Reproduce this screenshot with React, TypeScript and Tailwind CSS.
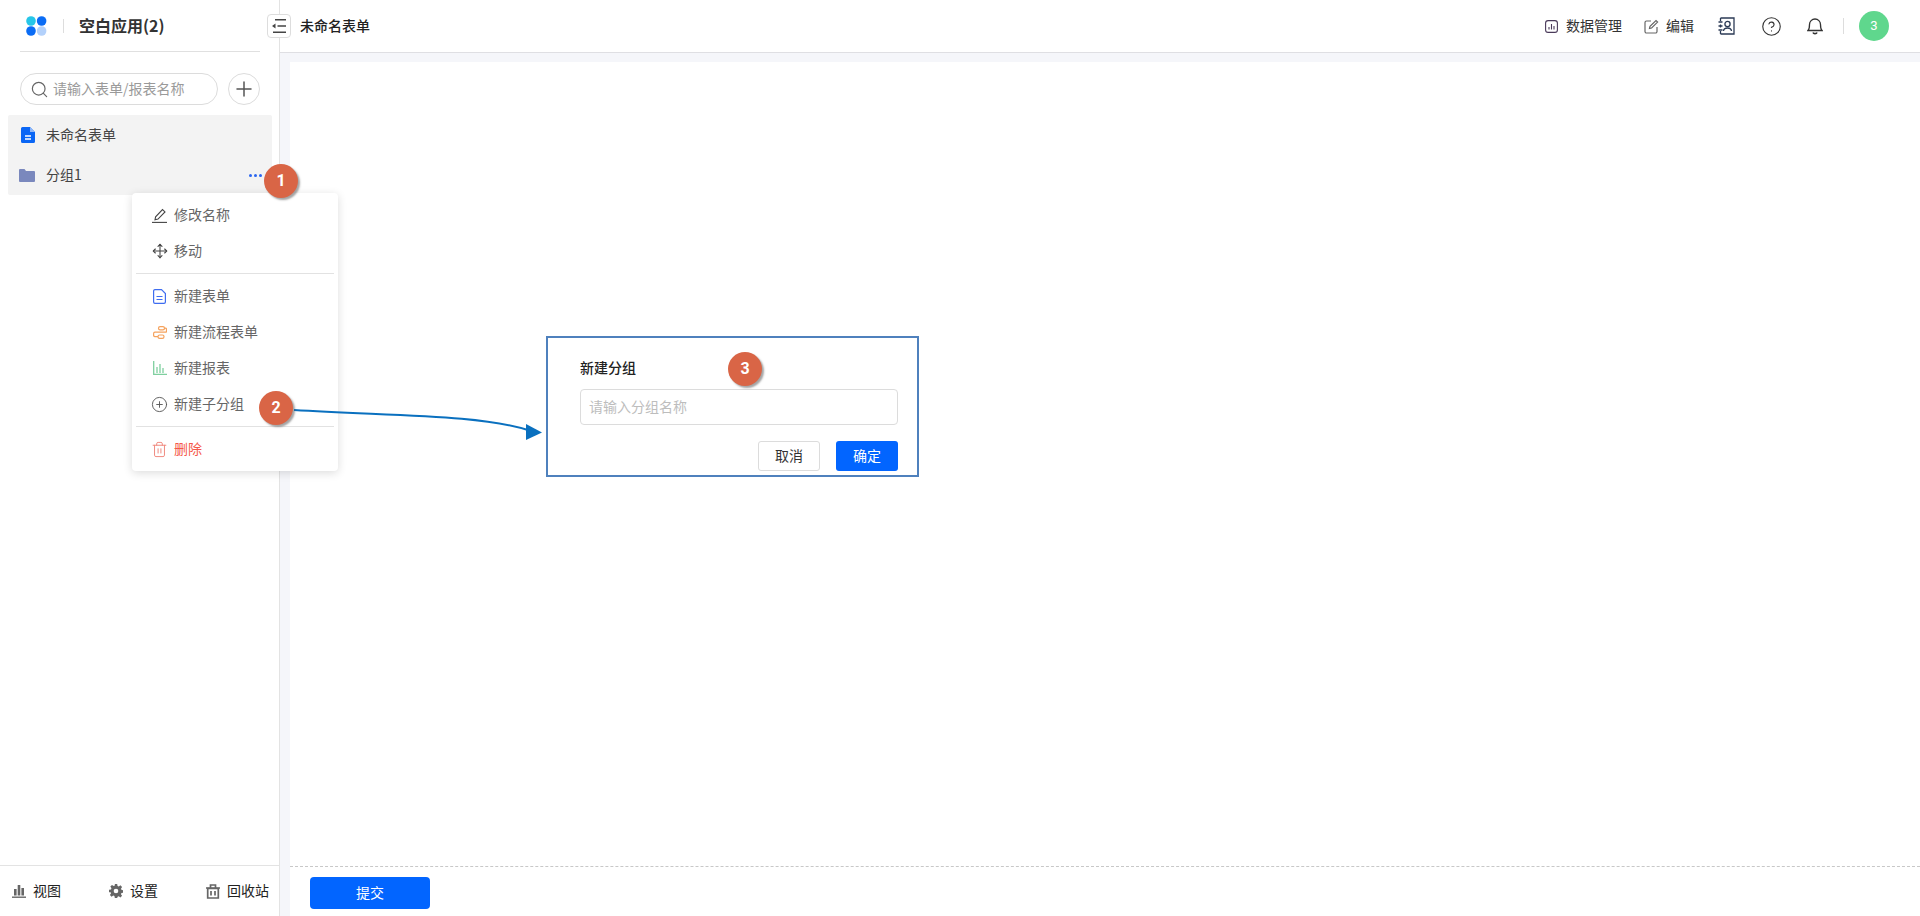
import React from "react";
import { Search, Plus, Move, CirclePlus, Trash2, HelpCircle } from "lucide-react";

function Badge({ n, className }: { n: number; className: string }) {
  return (
    <div className={`absolute w-[34px] h-[34px] rounded-full bg-[#d96546] text-white text-[16px] font-bold flex items-center justify-center shadow-[2px_2px_2px_rgba(90,90,90,0.55)] font-['Roboto',sans-serif] ${className}`}>
      {n}
    </div>
  );
}

function T({ children, className }: { children: React.ReactNode; className?: string }) {
  return <span className={`pb-[2px] ${className ?? ""}`}>{children}</span>;
}

function MenuItem({ icon, label, color }: { icon: React.ReactNode; label: string; color?: string }) {
  return (
    <div className={`h-9 flex items-center pl-[20px] gap-[7px] text-[14px] ${color ?? "text-[#666666]"}`}>
      <span className="w-[15px] h-[15px] flex items-center justify-center">{icon}</span>
      <T>{label}</T>
    </div>
  );
}

function Logo() {
  return (
    <svg width="21" height="20" viewBox="0 0 21 20" className="shrink-0">
      <circle cx="5" cy="5" r="4.8" fill="#26c6e8" />
      <circle cx="15.6" cy="5" r="4.8" fill="#0a6cf5" />
      <circle cx="5" cy="15" r="4.8" fill="#0a6cf5" />
      <circle cx="15.6" cy="15" r="4.8" fill="#b3d1fb" />
    </svg>
  );
}

export default function App() {
  return (
    <div className="relative w-[1920px] h-[916px] overflow-hidden bg-white flex font-['Noto_Sans_CJK_SC','Noto_Sans',sans-serif] text-[#333]">
      {/* Sidebar */}
      <aside className="w-[280px] h-full shrink-0 border-r border-[#e3e3e3] flex flex-col bg-white">
        <div className="h-[52px] ml-[20px] mr-[19px] border-b border-[#e0e0e0] flex items-center pl-[6px] shrink-0">
          <Logo />
          <div className="w-px h-[14px] bg-[#dddddd] ml-[16px] mr-[15px]" />
          <T className="text-[16px] font-bold text-[#333]">空白应用(2)</T>
        </div>
        <div className="mt-[21px] ml-[20px] flex gap-[10px] shrink-0">
          <div className="w-[198px] h-8 shrink-0 rounded-full border border-[#dcdcdc] flex items-center pl-[9px] gap-[4px]">
            <Search size={19} color="#666" strokeWidth={1.5} className="shrink-0" />
            <T className="text-[14px] text-[#9a9a9a]">请输入表单/报表名称</T>
          </div>
          <div className="w-8 h-8 shrink-0 rounded-full border border-[#dcdcdc] flex items-center justify-center">
            <Plus size={24} color="#555" strokeWidth={1.5} />
          </div>
        </div>
        <div className="mt-[10px] ml-[8px] mr-[7px] bg-[#f3f3f3] rounded-[2px] shrink-0">
          <div className="h-10 flex items-center pl-[13px] gap-[11px] text-[14px] text-[#444]">
            <svg width="14" height="16" viewBox="0 0 14 16" className="shrink-0">
              <path d="M1.5 0H9l5 5v9.500a1.500 1.500 0 0 1-1.500 1.500h-11A1.500 1.500 0 0 1 0 14.500v-13A1.500 1.500 0 0 1 1.500 0z" fill="#0a66f5" />
              <path d="M9 0l5 5H9z" fill="#8fb8f9" />
              <path d="M4 9h6M4 12h6" stroke="#fff" strokeWidth="1.3" />
            </svg>
            <T>未命名表单</T>
          </div>
          <div className="h-10 flex items-center pl-[11px] gap-[11px] text-[14px] text-[#444]">
            <svg width="16" height="13" viewBox="0 0 16 13" className="shrink-0">
              <path d="M0 1a1 1 0 0 1 1-1h4.500l1.500 2h8a1 1 0 0 1 1 1v9a1 1 0 0 1-1 1H1a1 1 0 0 1-1-1z" fill="#7a88bd" />
            </svg>
            <T className="flex-1">分组1</T>
            <div className="flex gap-[2px] mr-[10px]">
              <i className="w-[3px] h-[3px] rounded-full bg-[#2a66f0]" />
              <i className="w-[3px] h-[3px] rounded-full bg-[#2a66f0]" />
              <i className="w-[3px] h-[3px] rounded-full bg-[#2a66f0]" />
            </div>
          </div>
        </div>
        <div className="flex-1" />
        <div className="h-[51px] border-t border-[#e3e3e3] flex items-center justify-between pl-[12px] pr-[10px] text-[14px] text-[#222] shrink-0">
          <div className="flex items-center gap-[7px]">
            <svg width="14" height="14" viewBox="0 0 14 14" fill="#666">
              <rect x="2" y="5" width="2.600" height="6.500" />
              <rect x="5.700" y="1" width="2.600" height="10.500" />
              <rect x="9.400" y="4" width="2.600" height="7.500" />
              <rect x="0" y="12.500" width="14" height="1.400" />
            </svg>
            <T>视图</T>
          </div>
          <div className="flex items-center gap-[7px]">
            <svg width="14" height="14" viewBox="0 0 24 24" fill="#666">
              <path fillRule="evenodd" d="M10 0h4l.7 3.400 2 .8 2.900-1.900 2.800 2.800-1.900 2.900.8 2 3.400.7v4l-3.400.7-.8 2 1.900 2.900-2.800 2.800-2.900-1.900-2 .8L14 24h-4l-.7-3.400-2-.8-2.900 1.900-2.800-2.800 1.900-2.900-.8-2L0 14v-4l3.400-.7.8-2-1.900-2.900 2.800-2.800 2.900 1.900 2-.8zM12 8a4 4 0 1 0 0 8 4 4 0 0 0 0-8z" />
            </svg>
            <T>设置</T>
          </div>
          <div className="flex items-center gap-[7px]">
            <svg width="14" height="15" viewBox="0 0 14 15" fill="none" stroke="#666" strokeWidth="1.700">
              <path d="M0 4h14M4.500 4V1h5v3" />
              <path d="M1.700 4.500h10.600V14H1.700z" />
              <path d="M5 7v4.500M9 7v4.500" />
            </svg>
            <T>回收站</T>
          </div>
        </div>
      </aside>

      {/* Main */}
      <main className="flex-1 flex flex-col min-w-0">
        <header className="h-[53px] shrink-0 border-b border-[#dfdfe3] flex items-center bg-white">
          <T className="ml-[20px] text-[14px] font-medium text-[#222]">未命名表单</T>
          <div className="flex-1" />
          <div className="flex items-center text-[14px] text-[#333]">
            <svg width="13" height="13" viewBox="0 0 13 13" fill="none" stroke="#4a3a5a" strokeWidth="1.100" className="mr-[8px]">
              <rect x=".6" y=".6" width="11.800" height="11.800" rx="2.500" />
              <path d="M4 9.500V7M6.500 9.500V4M9 9.500V6" />
            </svg>
            <T className="mr-[22px]">数据管理</T>
            <svg width="15" height="15" viewBox="0 0 15 15" fill="none" stroke="#666" strokeWidth="1.200" className="mr-[7px]">
              <path d="M13 8v4.500a1.500 1.500 0 0 1-1.500 1.500h-9A1.500 1.500 0 0 1 1 12.500v-9A1.500 1.500 0 0 1 2.500 2H7" />
              <path d="M5.500 9.500l.5-2.200L12 1.500l1.600 1.600-6 5.900z" />
            </svg>
            <T className="mr-[24px]">编辑</T>
            <svg width="17" height="18" viewBox="0 0 17 18" fill="none" stroke="#2b3a55" strokeWidth="1.300" className="mr-[26px]">
              <path d="M2.500 1h13.500v16H2.500" />
              <path d="M2.500 1v3M2.500 7.500v3M2.500 14v3M0.500 5h4M0.500 9h4M0.500 13h4" />
              <circle cx="9.500" cy="7" r="2.600" />
              <path d="M5.500 14c.5-4 7.500-4 8 0" />
            </svg>
            <HelpCircle size={21} color="#333" strokeWidth={1.3} className="mr-[25px]" />
            <svg width="16" height="18" viewBox="0 0 16 18" fill="none" stroke="#333" strokeWidth="1.300" className="mr-[20px]">
              <path d="M1 13.500c1.500-1.500 1.500-3 1.500-6a5.500 5.500 0 0 1 11 0c0 3 0 4.500 1.500 6z" />
              <path d="M6 15.500c.5 1.500 3.500 1.500 4 0" strokeWidth="1.600" />
            </svg>
            <div className="w-px h-[16px] bg-[#dddddd] mr-[15px]" />
            <div className="w-[30px] h-[30px] rounded-full bg-[#5fd78d] text-white text-[13px] flex items-center justify-center mr-[31px] font-['Roboto',sans-serif]">3</div>
          </div>
        </header>
        <div className="flex-1 bg-[#f5f6fa] pl-[10px] pt-[9px] flex flex-col min-h-0">
          <div className="flex-1 bg-white" />
          <div className="h-[50px] bg-white border-t border-dashed border-[#c8c8c8] pl-[20px] pt-[10px] shrink-0">
            <div className="w-[120px] h-8 rounded-[4px] bg-[#0265ff] text-white text-[14px] flex items-center justify-center"><T>提交</T></div>
          </div>
        </div>
      </main>

      {/* Popup menu */}
      <div className="absolute left-[132px] top-[193px] w-[206px] h-[278px] bg-white rounded-[4px] shadow-[0_2px_10px_rgba(0,0,0,0.14)] py-[4px]">
        <MenuItem
          label="修改名称"
          icon={
            <svg width="16" height="15" viewBox="0 0 16 15" fill="none" stroke="#444" strokeWidth="1.100" className="shrink-0">
              <path d="M0 14.400h15" />
              <path d="M3 11.800l.6-3L10.500 1.500l2.500 2.400-7 7.200z" />
            </svg>
          }
        />
        <MenuItem label="移动" icon={<Move size={16} color="#444" strokeWidth={1.6} className="shrink-0" />} />
        <div className="h-px bg-[#e2e2e2] mx-[4px] my-[4px]" />
        <MenuItem
          label="新建表单"
          icon={
            <svg width="13" height="15" viewBox="0 0 13 15" fill="none" stroke="#3f6df0" strokeWidth="1.200" className="shrink-0">
              <path d="M1.500.6H8.500L12.400 4.500V13a1.400 1.400 0 0 1-1.400 1.400H2A1.400 1.400 0 0 1 .6 13V2A1.400 1.400 0 0 1 2 .6z" />
              <path d="M3.500 7.500h6M3.500 10.500h6" />
            </svg>
          }
        />
        <MenuItem
          label="新建流程表单"
          icon={
            <svg width="14" height="13" viewBox="0 0 14 13" fill="none" stroke="#f5a25d" strokeWidth="1.200" className="shrink-0">
              <rect x="5.500" y=".6" width="6" height="3.300" rx="1.600" />
              <rect x="5" y="9" width="6" height="3.300" rx="1.600" />
              <path d="M11.500 2.200h1a1 1 0 0 1 1 1v2a1 1 0 0 1-1 1H2a1.500 1.500 0 0 0-1.400 1.500v1.800A1.500 1.500 0 0 0 2 10.600h3" />
            </svg>
          }
        />
        <MenuItem
          label="新建报表"
          icon={
            <svg width="14" height="14" viewBox="0 0 14 14" fill="none" stroke="#7fcf9f" strokeWidth="1.300" className="shrink-0">
              <path d="M.7 0v13.300H14M4 12V6M7 12V3M10 12V7" />
            </svg>
          }
        />
        <MenuItem label="新建子分组" icon={<CirclePlus size={17} color="#555" strokeWidth={1.300} className="shrink-0" />} />
        <div className="h-px bg-[#e2e2e2] mx-[4px] my-[4px]" />
        <MenuItem label="删除" color="text-[#f5574a]" icon={<Trash2 size={17} color="#f08a80" strokeWidth={1.400} className="shrink-0" />} />
      </div>

      {/* Toggle button */}
      <div className="absolute left-[267px] top-[14px] w-6 h-6 rounded-[4px] border border-[#dddddd] bg-white flex items-center justify-center">
        <svg width="14" height="14" viewBox="0 0 14 14" fill="none" stroke="#444" strokeWidth="1.500">
          <path d="M3 .8h11M5.500 7H14M1 13.200h13" />
          <path d="M0 7l3.500-2.500v5z" fill="#444" stroke="none" />
        </svg>
      </div>

      {/* Annotation dialog */}
      <div className="absolute left-[546px] top-[336px] w-[373px] h-[141px] border-2 border-[#4f81bd] bg-white pl-[32px] pr-[19px]">
        <div className="mt-[18px] text-[14px] leading-[22px] font-medium text-[#222]">新建分组</div>
        <div className="mt-[11px] h-9 border border-[#dcdcdc] rounded-[4px] flex items-center pl-[8px] text-[14px] text-[#bdbdbd]"><T>请输入分组名称</T></div>
        <div className="mt-[16px] flex justify-end gap-[16px]">
          <div className="w-[62px] h-[30px] border border-[#dcdcdc] rounded-[3px] text-[14px] text-[#333] flex items-center justify-center"><T>取消</T></div>
          <div className="w-[62px] h-[30px] rounded-[3px] bg-[#0265ff] text-[14px] text-white flex items-center justify-center"><T>确定</T></div>
        </div>
      </div>

      {/* Arrow */}
      <svg className="absolute left-[290px] top-[400px]" width="256" height="50" viewBox="0 0 256 50" fill="none">
        <path d="M4 10 C100 16 190 14 241 31" stroke="#0a70bf" strokeWidth="2" />
        <path d="M252 32.500 L236 24 L236 40 Z" fill="#0a70bf" />
      </svg>

      <Badge n={1} className="left-[264px] top-[164px]" />
      <Badge n={2} className="left-[259px] top-[391px]" />
      <Badge n={3} className="left-[728px] top-[352px]" />
    </div>
  );
}
